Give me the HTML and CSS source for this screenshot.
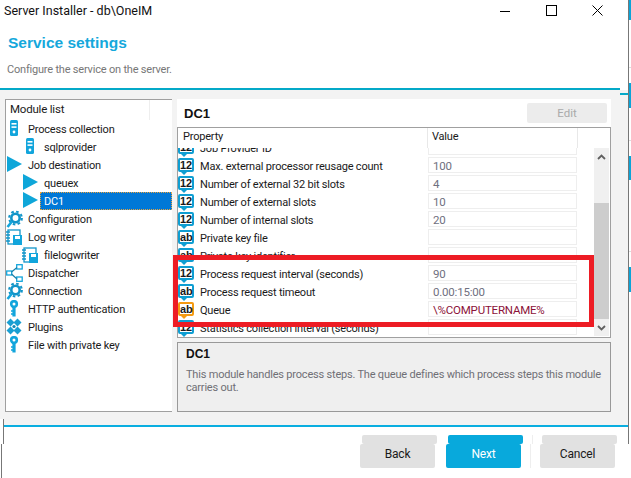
FILE: index.html
```html
<!DOCTYPE html>
<html>
    <head>
        <title>Server Installer</title>
        <link rel="stylesheet" href="styles.css">
    </head>

    <body>
        <svg class="defs">
            <symbol id="i-server" viewBox="0 0 18 18">
                <rect x="4" y="0" width="8" height="16" rx="1.5" fill="#12a5dc"/>
                <rect x="5.5" y="3" width="5" height="1.6" fill="#fff"/>
                <rect x="5.5" y="6.3" width="5" height="1.6" fill="#fff"/>
                <circle cx="8" cy="12" r="1.4" fill="#fff"/>
            </symbol>
            <symbol id="i-arrow" viewBox="0 0 18 18">
                <path d="M1 0 L16 8 L1 16 Z" fill="#0ea6d9"/>
            </symbol>
            <symbol id="i-gear" viewBox="0 0 18 18">
                <circle cx="9.5" cy="8" r="4.2" fill="none" stroke="#1295c9" stroke-width="2.6"/>
                <circle cx="9.5" cy="8" r="6.4" fill="none" stroke="#1295c9" stroke-width="2" stroke-dasharray="2.6 2.4"/>
                <path d="M6 11.5 L1.5 17" stroke="#12a5dc" stroke-width="2.6"/>
            </symbol>
            <symbol id="i-log" viewBox="0 0 18 18">
                <rect x="2" y="2" width="12" height="14" fill="none" stroke="#1295c9" stroke-width="1.3"/>
                <path d="M0 4 H4 M0 7 H4 M0 10 H4 M0 13 H4" stroke="#1295c9" stroke-width="1.3"/>
                <rect x="7" y="7" width="9" height="10" fill="#12a5dc"/>
                <rect x="9" y="8" width="5" height="3" fill="#fff"/>
            </symbol>
            <symbol id="i-share" viewBox="0 0 18 18">
                <rect x="0.7" y="7" width="5" height="4" fill="#fff" stroke="#12a5dc" stroke-width="1.3"/>
                <rect x="10.7" y="0.7" width="5.5" height="4.3" fill="#fff" stroke="#12a5dc" stroke-width="1.3"/>
                <rect x="10.7" y="13" width="5.5" height="4.3" fill="#fff" stroke="#12a5dc" stroke-width="1.3"/>
                <path d="M5.5 8 L11 3.5 M5.5 10 L11 15" stroke="#1a7fa8" stroke-width="1.2"/>
            </symbol>
            <symbol id="i-key" viewBox="0 0 18 18">
                <circle cx="8" cy="4" r="2.8" fill="none" stroke="#12a5dc" stroke-width="2.6"/>
                <path d="M8 6 V16.5" stroke="#12a5dc" stroke-width="3.2"/>
                <path d="M5 11 H7 M5 14 H7" stroke="#12a5dc" stroke-width="1.6"/>
            </symbol>
            <symbol id="i-plugin" viewBox="0 0 18 18">
                <path d="M4.5 0.5 L8.5 4.5 L4.5 8.5 L0.5 4.5 Z M11.5 0.5 L15.5 4.5 L11.5 8.5 L7.5 4.5 Z M4.5 8.5 L8.5 12.5 L4.5 16.5 L0.5 12.5 Z M11.5 8.5 L15.5 12.5 L11.5 16.5 L7.5 12.5 Z" fill="#1a9fd2"/>
                <circle cx="8" cy="8.5" r="1.6" fill="#0f86b4"/>
            </symbol>
        </svg>

        <div class="page">
            <div class="window">
                <div class="top">
                    <div class="titlebar">
                        <span class="title">Server Installer - db\OneIM</span>
                        <div class="controls">
                            <span class="control"><svg width="10" height="10"><path d="M0 5.5 H10" stroke="#000"/></svg></span>
                            <span class="control"><svg width="11" height="11"><rect x="0.5" y="0.5" width="10" height="10" fill="none" stroke="#000"/></svg></span>
                            <span class="control"><svg width="11" height="11"><path d="M0.5 0.5 L10.5 10.5 M10.5 0.5 L0.5 10.5" stroke="#000"/></svg></span>
                        </div>
                    </div>
                    <h1>Service settings</h1>
                    <p class="subtitle">Configure the service on the server.</p>
                </div>
                <div class="rule-top"></div>

                <div class="main">
                    <div class="modules">
                        <div class="modules-head">
                            <span class="modules-title">Module list</span>
                        </div>
                        <div class="node"><svg class="icon"><use href="#i-server"/></svg><span class="label">Process collection</span></div>
                        <div class="node child"><svg class="icon"><use href="#i-server"/></svg><span class="label">sqlprovider</span></div>
                        <div class="node"><svg class="icon"><use href="#i-arrow"/></svg><span class="label">Job destination</span></div>
                        <div class="node child"><svg class="icon"><use href="#i-arrow"/></svg><span class="label">queuex</span></div>
                        <div class="node child"><svg class="icon"><use href="#i-arrow"/></svg><span class="label selected">DC1</span></div>
                        <div class="node"><svg class="icon"><use href="#i-gear"/></svg><span class="label">Configuration</span></div>
                        <div class="node"><svg class="icon"><use href="#i-log"/></svg><span class="label">Log writer</span></div>
                        <div class="node child"><svg class="icon"><use href="#i-log"/></svg><span class="label">filelogwriter</span></div>
                        <div class="node"><svg class="icon"><use href="#i-share"/></svg><span class="label">Dispatcher</span></div>
                        <div class="node"><svg class="icon"><use href="#i-gear"/></svg><span class="label">Connection</span></div>
                        <div class="node"><svg class="icon"><use href="#i-key"/></svg><span class="label">HTTP authentication</span></div>
                        <div class="node"><svg class="icon"><use href="#i-plugin"/></svg><span class="label">Plugins</span></div>
                        <div class="node"><svg class="icon"><use href="#i-key"/></svg><span class="label">File with private key</span></div>
                    </div>

                    <div class="detail">
                        <div class="detail-head">
                            <span class="detail-title">DC1</span>
                            <button class="edit" type="button">Edit</button>
                        </div>

                        <div class="grid">
                            <div class="grid-head">
                                <span class="head-prop">Property</span>
                                <span class="head-val">Value</span>
                            </div>
                            <div class="grid-body">
                                <div class="rows">
                                    <div class="row first"><span class="type">12</span><span class="prop">Job Provider ID</span><span class="cell"></span></div>
                                    <div class="row"><span class="type">12</span><span class="prop">Max. external processor reusage count</span><span class="cell">100</span></div>
                                    <div class="row"><span class="type">12</span><span class="prop">Number of external 32 bit slots</span><span class="cell">4</span></div>
                                    <div class="row"><span class="type">12</span><span class="prop">Number of external slots</span><span class="cell">10</span></div>
                                    <div class="row"><span class="type">12</span><span class="prop">Number of internal slots</span><span class="cell">20</span></div>
                                    <div class="row"><span class="type">ab</span><span class="prop">Private key file</span><span class="cell"></span></div>
                                    <div class="row"><span class="type">ab</span><span class="prop">Private key identifier</span><span class="cell"></span></div>
                                    <div class="row"><span class="type">12</span><span class="prop">Process request interval (seconds)</span><span class="cell">90</span></div>
                                    <div class="row"><span class="type">ab</span><span class="prop">Process request timeout</span><span class="cell">0.00:15:00</span></div>
                                    <div class="row"><span class="type type-required">ab</span><span class="prop">Queue</span><span class="cell required">\%COMPUTERNAME%</span></div>
                                    <div class="row"><span class="type">12</span><span class="prop">Statistics collection interval (seconds)</span><span class="cell"></span></div>
                                </div>
                                <div class="scrollbar">
                                    <span class="arrow"><svg width="9" height="6"><path d="M1 5 L4.5 1.5 L8 5" fill="none" stroke="#606060" stroke-width="1.8"/></svg></span>
                                    <span class="thumb"></span>
                                    <span class="arrow"><svg width="9" height="6"><path d="M1 1 L4.5 4.5 L8 1" fill="none" stroke="#606060" stroke-width="1.8"/></svg></span>
                                </div>
                            </div>
                        </div>

                        <div class="desc">
                            <p class="desc-title">DC1</p>
                            <p class="desc-text">This module handles process steps. The queue defines which process steps this module carries out.</p>
                        </div>
                    </div>
                </div>

                <div class="rule-bottom"></div>
                <div class="footer">
                    <div class="btn-row ghosts">
                        <span class="btn ghost"></span>
                        <span class="btn ghost ghost-next"></span>
                        <span class="sep"></span>
                        <span class="btn ghost"></span>
                    </div>
                    <div class="btn-row">
                        <span class="btn">Back</span>
                        <span class="btn next">Next</span>
                        <span class="sep"></span>
                        <span class="btn">Cancel</span>
                    </div>
                </div>
            </div>

            <div class="edge">
                <i class="tab"></i><i></i><i class="tick"></i><i></i>
                <i class="tab"></i><i></i><i class="tick"></i><i></i>
                <i class="tab"></i><i></i><i class="tick"></i><i></i>
                <i class="tab"></i>
            </div>

            <div class="stub-teal"></div>
            <div class="stub-upper"></div>
            <div class="stub-lower"></div>
            <div class="highlight"></div>
        </div>
    </body>
</html>
```

FILE: styles.css
```css
* {
    box-sizing: border-box;
}

body {
    background-color: white;
    color: #1a1a1a;
    font-family: "Roboto", "Liberation Sans", sans-serif;
    font-size: 11px;
    letter-spacing: -0.2px;
    margin: 0;
}

p, h1 {
    margin: 0;
}

.defs {
    height: 0;
    position: absolute;
    width: 0;
}

.page {
    display: flex;
    height: 478px;
    overflow: hidden;
    position: relative;
    width: 631px;
}

.window {
    display: flex;
    flex-direction: column;
    width: 628px;
}

.top {
    height: 88px;
}

.titlebar {
    align-items: center;
    display: flex;
    height: 21px;
    justify-content: space-between;
    padding-left: 4px;
    padding-right: 8px;
}

.title {
    color: #111;
    font-size: 12.5px;
    letter-spacing: 0;
}

.controls {
    display: flex;
}

.control {
    align-items: center;
    display: flex;
    height: 21px;
    justify-content: center;
    width: 46px;
}

h1 {
    color: #14a8dc;
    font-family: "Liberation Sans", sans-serif;
    font-size: 15.5px;
    font-weight: bold;
    letter-spacing: 0;
    line-height: 20px;
    margin-top: 12px;
    padding-left: 8px;
}

.subtitle {
    color: #777;
    line-height: 16px;
    margin-top: 9px;
    padding-left: 7px;
}

.rule-top {
    background-color: #04a9c8;
    height: 2px;
    width: 620px;
}

.main {
    background-color: #f3f3f3;
    display: flex;
    gap: 5px;
    height: 335px;
    padding: 9px 0 0 5px;
}

.modules {
    background-color: white;
    border-bottom: 1px solid #a0a0a0;
    border-left: 1px solid #a0a0a0;
    border-top: 1px solid #a0a0a0;
    height: 313px;
    width: 167px;
}

.modules-head {
    height: 20px;
}

.modules-title {
    border-right: 1px solid #eee;
    display: block;
    font-size: 11.5px;
    height: 20px;
    line-height: 18px;
    padding-left: 4px;
    width: 144px;
}

.node {
    display: flex;
    height: 18px;
}

.child {
    padding-left: 16px;
}

.icon {
    flex: none;
    height: 18px;
    width: 18px;
}

.label {
    line-height: 20px;
    padding: 0 4px;
}

.selected {
    background-color: #0078d7;
    color: white;
    flex: 1;
    outline: 1px dotted #e8a33d;
    outline-offset: -1px;
}

.detail {
    display: flex;
    flex-direction: column;
    width: 434px;
}

.detail-head {
    align-items: center;
    background-color: white;
    display: flex;
    height: 28px;
    justify-content: space-between;
    padding: 0 4px 0 7px;
}

.detail-title {
    color: #111;
    font-family: "Liberation Sans", sans-serif;
    font-size: 13px;
    font-weight: bold;
    letter-spacing: 0;
}

.edit {
    background-color: #ececec;
    border: none;
    border-radius: 2px;
    color: #aaa;
    font-family: inherit;
    font-size: 11.5px;
    height: 20px;
    width: 80px;
}

.grid {
    background-color: white;
    border: 1px solid #a0a0a0;
    display: flex;
    flex-direction: column;
    height: 211px;
}

.grid-head {
    display: flex;
    flex: none;
    height: 20px;
}

.head-prop {
    border-right: 1px solid #e8e8e8;
    line-height: 17px;
    padding-left: 5px;
    width: 250px;
}

.head-val {
    border-right: 1px solid #e8e8e8;
    line-height: 17px;
    padding-left: 4px;
    width: 150px;
}

.grid-body {
    display: flex;
    flex: 1;
    min-height: 0;
}

.rows {
    overflow: hidden;
    width: 416px;
}

.row {
    display: flex;
    height: 16px;
    margin-bottom: 2px;
}

.first {
    margin-top: -9px;
}

.type {
    background-color: white;
    border: 2px solid #0f9ed2;
    border-radius: 2px;
    color: #1a1a1a;
    flex: none;
    font-family: "Liberation Sans", sans-serif;
    font-size: 11px;
    font-weight: bold;
    height: 14px;
    letter-spacing: 0;
    line-height: 10px;
    margin-top: 1px;
    position: relative;
    text-align: center;
    width: 16px;
}

.type::after {
    background-color: #0f9ed2;
    clip-path: polygon(0 0, 100% 0, 50% 100%);
    content: "";
    height: 3px;
    left: 1px;
    position: absolute;
    top: calc(100% + 2px);
    width: 6px;
}

.type-required {
    border-color: #f59a12;
}

.type-required::after {
    background-color: #f59a12;
}

.prop {
    line-height: 20px;
    padding-left: 6px;
    white-space: nowrap;
    width: 234px;
}

.cell {
    border: 1px solid #eee;
    color: #6f7080;
    font-size: 11.5px;
    height: 16px;
    line-height: 16px;
    padding-left: 4px;
    width: 149px;
}

.required {
    color: #8c1238;
}

.scrollbar {
    background-color: #f0f0f0;
    display: flex;
    flex-direction: column;
    height: 188px;
    width: 15px;
}

.arrow {
    align-items: center;
    display: flex;
    height: 17px;
    justify-content: center;
}

.thumb {
    background-color: #cdcdcd;
    height: 116px;
    margin-top: 38px;
}

.desc {
    background-color: #efefef;
    border: 1px solid #999;
    height: 70px;
    margin-top: 4px;
    padding: 3px 8px;
}

.desc-title {
    color: #111;
    font-family: "Liberation Sans", sans-serif;
    font-size: 12px;
    font-weight: bold;
    letter-spacing: 0;
    line-height: 16px;
}

.desc-text {
    color: #6f6f76;
    line-height: 13px;
    margin-top: 6px;
}

.rule-bottom {
    background-color: #0aaee0;
    height: 2px;
    margin-left: 3px;
}

.footer {
    padding-top: 8px;
}

.btn-row {
    display: flex;
    gap: 11px;
    padding-left: 360px;
}

.ghosts {
    height: 9px;
    padding-left: 362px;
}

.btn {
    align-items: center;
    background-color: #e1e1e1;
    border-radius: 2px;
    display: flex;
    font-size: 12px;
    height: 24px;
    justify-content: center;
    padding-bottom: 4px;
    width: 75px;
}

.ghost {
    height: 9px;
}

.ghost-next {
    background-color: #08a9dc;
}

.next {
    background-color: #08a9dc;
    color: white;
}

.sep {
    background-color: #eee;
    margin: 0 -2px;
    width: 1px;
}

.edge {
    border-left: 1px solid #777;
    display: grid;
    grid-template-rows: 20px 47px 1px 15px 25px 32px 1px 15px 24px 71px 1px 15px 25px;
    height: 444px;
    width: 3px;
}

.tab {
    background-color: #0ba4d8;
}

.tick {
    background-color: #ddd;
}

.stub-teal {
    background-color: #04a9c8;
    height: 2px;
    left: 620px;
    position: absolute;
    top: 93px;
    width: 8px;
}

.stub-upper {
    background-color: white;
    border-right: 1px solid #777;
    height: 25px;
    left: 0;
    position: absolute;
    top: 419px;
    width: 4px;
}

.stub-lower {
    border-right: 1px solid #777;
    height: 34px;
    left: 0;
    position: absolute;
    top: 444px;
    width: 2px;
}

.highlight {
    border: 5px solid #ed1c24;
    height: 72px;
    left: 173px;
    position: absolute;
    top: 255px;
    width: 421px;
}
```
